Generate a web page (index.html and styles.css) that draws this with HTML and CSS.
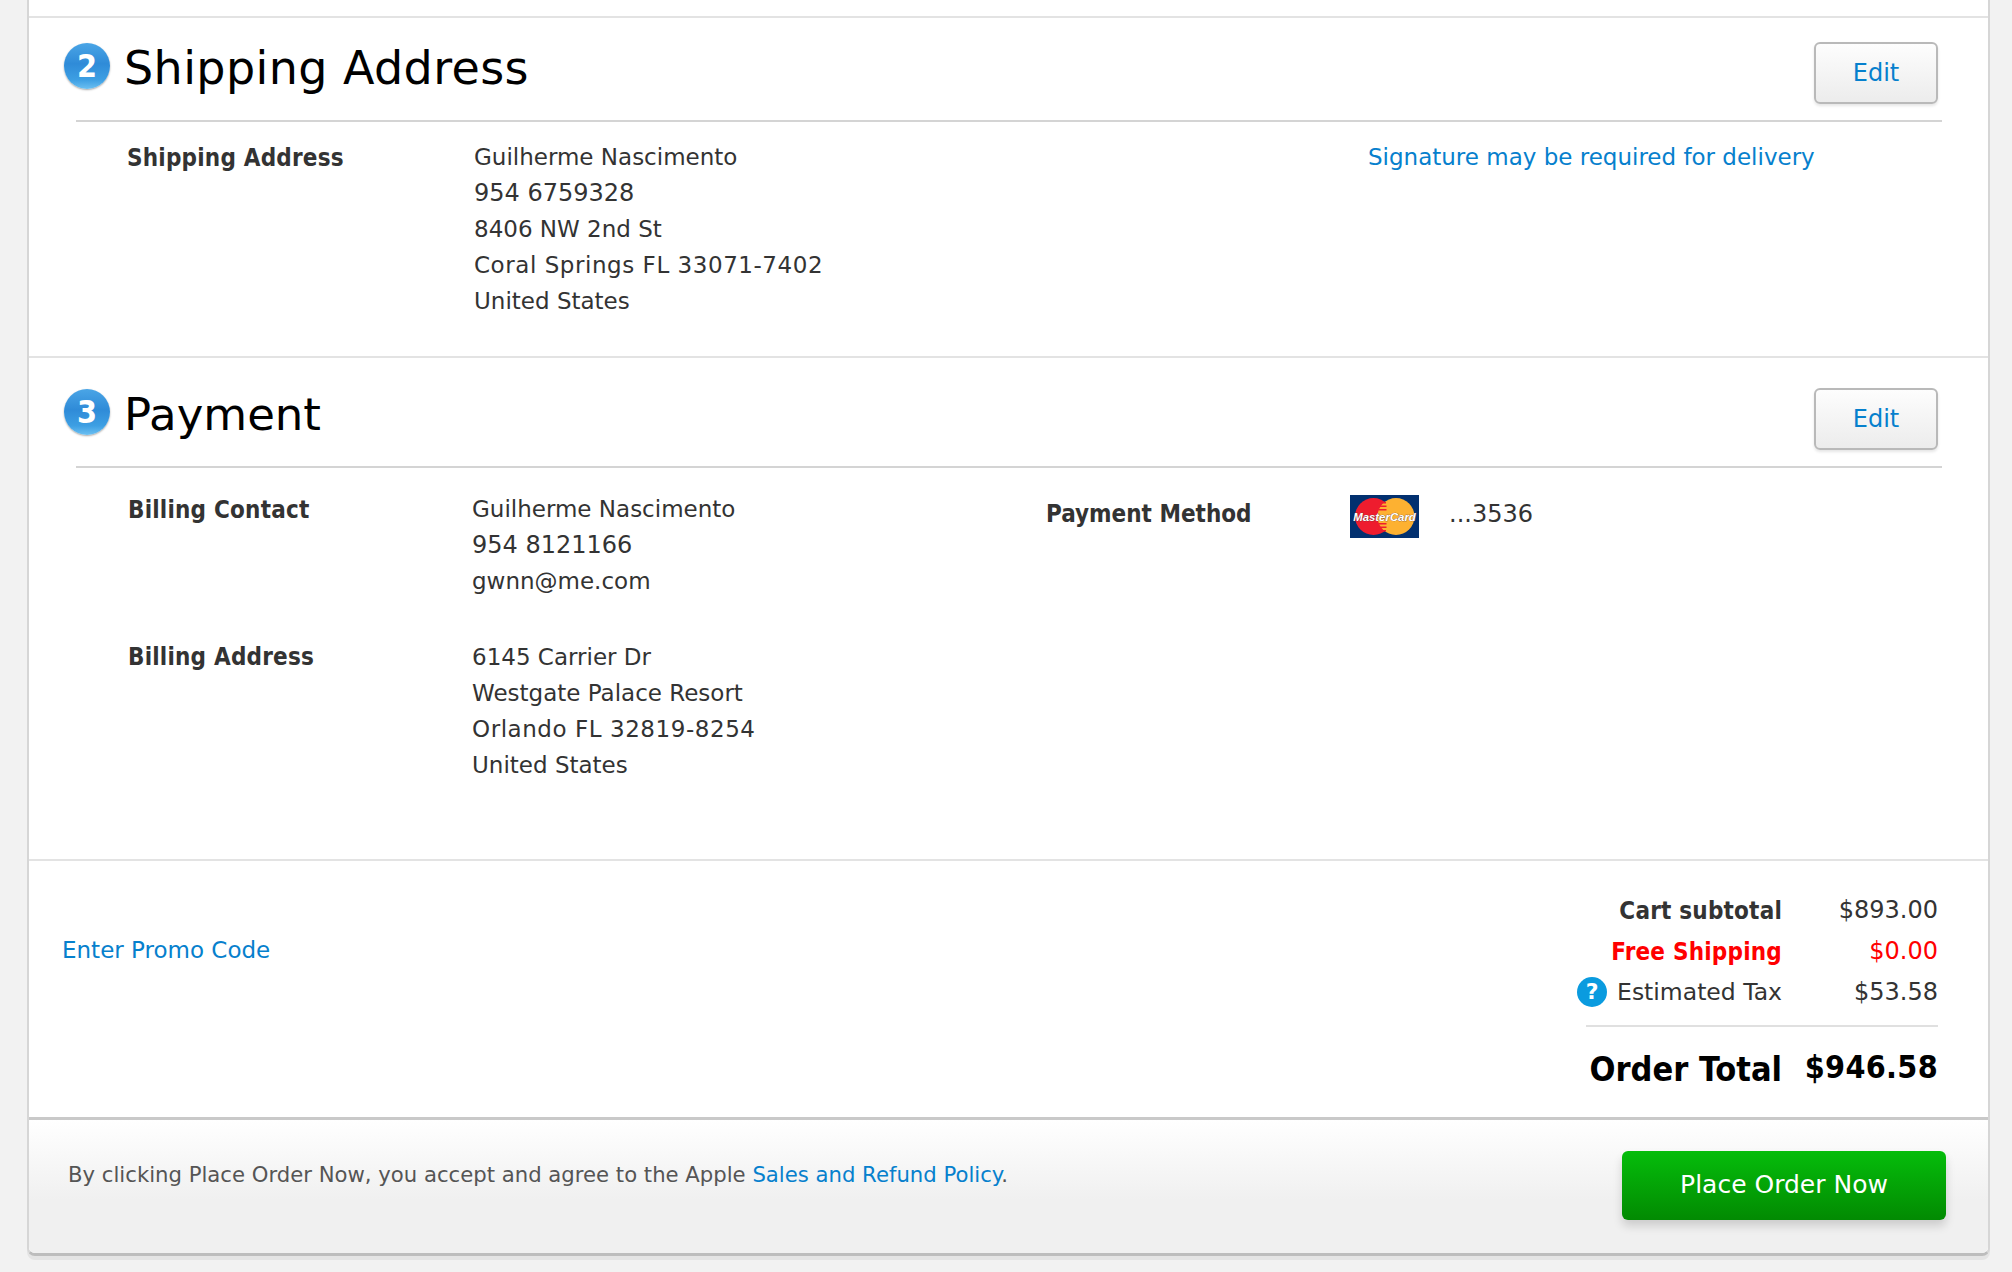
FILE: index.html
```html
<!DOCTYPE html>
<html lang="en">
<head>
<meta charset="utf-8">
<title>Checkout Review</title>
<link rel="stylesheet" href="styles.css">
</head>
<body>
<main class="panel">
  <section class="section section-shipping">
    <header class="head">
      <span class="step">2</span>
      <h2 class="title title-shipping">Shipping Address</h2>
      <a class="edit">Edit</a>
    </header>
    <div class="rows shipping-rows">
      <div class="label">Shipping Address</div>
      <div class="lines">
        <div>Guilherme Nascimento</div>
        <div class="num">954 6759328</div>
        <div>8406 NW 2nd St</div>
        <div class="wide">Coral Springs FL 33071-7402</div>
        <div>United States</div>
      </div>
      <a class="signature">Signature may be required for delivery</a>
    </div>
  </section>
  <section class="section section-payment">
    <header class="head head-payment">
      <span class="step">3</span>
      <h2 class="title title-payment">Payment</h2>
      <a class="edit">Edit</a>
    </header>
    <div class="rows payment-rows">
      <div class="billing">
        <div class="label">Billing Contact</div>
        <div class="lines">
          <div>Guilherme Nascimento</div>
          <div class="num">954 8121166</div>
          <div>gwnn@me.com</div>
        </div>
        <div class="label label-gap">Billing Address</div>
        <div class="lines lines-gap">
          <div>6145 Carrier Dr</div>
          <div>Westgate Palace Resort</div>
          <div class="wide">Orlando FL 32819-8254</div>
          <div>United States</div>
        </div>
      </div>
      <div class="method">
        <div class="label method-label">Payment Method</div>
        <svg class="card" viewBox="0 0 69 43" width="69" height="43" role="img" aria-label="MasterCard">
          <rect width="69" height="43" fill="#02306f"/>
          <circle cx="23.5" cy="21.5" r="18.5" fill="#ee1c2e"/>
          <circle cx="46" cy="21.5" r="18.5" fill="#fdb131"/>
          <g fill="#ee1c2e">
            <rect x="31" y="7" width="5" height="1.5"/>
            <rect x="29.5" y="10.5" width="7" height="1.5"/>
            <rect x="28.5" y="14" width="8" height="1.5"/>
            <rect x="28.5" y="28" width="8" height="1.5"/>
            <rect x="29.5" y="31.5" width="7" height="1.5"/>
            <rect x="31" y="35" width="5" height="1.5"/>
          </g>
          <text class="card-text" x="34.5" y="25.5" text-anchor="middle">MasterCard</text>
        </svg>
        <div class="card-num num">...3536</div>
      </div>
    </div>
  </section>
  <section class="summary">
    <a class="promo">Enter Promo Code</a>
    <div class="totals">
      <div class="total-row">
        <div class="total-label strong">Cart subtotal</div>
        <div class="total-value">$893.00</div>
      </div>
      <div class="total-row red">
        <div class="total-label strong">Free Shipping</div>
        <div class="total-value">$0.00</div>
      </div>
      <div class="total-row">
        <div class="total-label tax"><span class="help">?</span><span>Estimated Tax</span></div>
        <div class="total-value">$53.58</div>
      </div>
      <div class="total-row grand">
        <div class="total-label">Order Total</div>
        <div class="total-value">$946.58</div>
      </div>
    </div>
  </section>
  <footer class="foot">
    <p class="terms">By clicking Place Order Now, you accept and agree to the Apple <a>Sales and Refund Policy</a>.</p>
    <a class="place">Place Order Now</a>
  </footer>
</main>
</body>
</html>
```
FILE: styles.css
```css
* { box-sizing: border-box; }
html, body { margin: 0; height: 100%; }
body {
  background: #f2f2f2;
  font-family: "DejaVu Sans", sans-serif;
  font-size: 23px;
  color: #333;
  overflow: hidden;
}
a { color: #0680cd; }
.panel {
  width: 1963px;
  margin-left: 27px;
  height: 1256px;
  background: #fff;
  border-left: 2px solid #d6d6d6;
  border-right: 2px solid #d6d6d6;
  border-bottom: 3px solid #bdbdbd;
  border-radius: 0 0 8px 8px;
  box-shadow: 0 4px 0 #e4e4e4;
  display: flex;
  flex-direction: column;
}
.section { border-top: 2px solid #e3e3e3; }
.section-shipping { margin-top: 16px; height: 340px; }
.section-payment { height: 503px; }
.head {
  display: flex;
  align-items: center;
  height: 104px;
  margin: 0 46px 0 47px;
  padding-bottom: 6px;
  border-bottom: 2px solid #d4d4d4;
}
.head-payment { height: 110px; padding-bottom: 0; }
.step {
  width: 46px;
  height: 46px;
  margin-left: -12px;
  border-radius: 50%;
  background: linear-gradient(#4aa5e6 0, #2f8bd8 45%, #3d9fe3 80%, #6cc0f2 100%);
  box-shadow: 0 1px 2px rgba(0,0,0,.35);
  color: #fff;
  font-size: 32px;
  font-stretch: condensed;
  font-weight: 700;
  line-height: 46px;
  text-align: center;
}
.title {
  margin: 4px 0 0 14px;
  font-size: 46px;
  font-weight: 400;
  color: #000;
  flex: 1;
}
.title-shipping { letter-spacing: .4px; }
.title-payment { font-size: 45px; }
.edit {
  width: 124px;
  height: 62px;
  margin-right: 4px;
  margin-top: 14px;
  border: 2px solid #b9b9b9;
  border-radius: 6px;
  background: linear-gradient(#fdfdfd, #ececec);
  box-shadow: 0 2px 3px rgba(0,0,0,.1);
  font-size: 24px;
  line-height: 58px;
  text-align: center;
}
.rows { display: flex; position: relative; }
.shipping-rows { padding: 18px 0 0 98px; }
.shipping-rows .label { width: 347px; }
.payment-rows { padding: 24px 0 0 99px; }
.label { font-weight: 700; font-size: 24px; font-stretch: condensed; line-height: 36px; letter-spacing: .2px; }
.method-label { letter-spacing: 0; }
.lines { line-height: 36px; margin-top: -1px; }
.num { font-size: 24px; }
.wide { letter-spacing: .55px; }
.signature { position: absolute; left: 1339px; top: 17px; line-height: 36px; }
.billing { display: grid; grid-template-columns: 344px 600px; width: 918px; }
.label-gap, .lines-gap { margin-top: 40px; }
.method { display: flex; align-items: flex-start; padding-top: 4px; }
.method-label { width: 304px; }
.card { display: block; margin-top: -1px; flex: none; }
.card-text {
  font: italic 700 11.4px "Liberation Sans", sans-serif;
  fill: #fff;
  stroke: #5a3a3a;
  stroke-width: .5px;
  paint-order: stroke;
}
.card-num { margin-left: 30px; line-height: 36px; }
.summary {
  border-top: 2px solid #e3e3e3;
  height: 258px;
  display: flex;
  justify-content: space-between;
  padding: 0 50px 0 33px;
}
.promo { line-height: 36px; margin-top: 71px; }
.totals { width: 352px; padding-top: 31px; }
.total-row { display: flex; line-height: 36px; height: 41px; }
.total-label { flex: 1; min-width: 0; white-space: nowrap; display: flex; justify-content: flex-end; align-items: flex-start; }
.total-value { width: 156px; flex: none; text-align: right; font-size: 24px; }
.strong { font-weight: 700; font-size: 24px; font-stretch: condensed; letter-spacing: .2px; padding-top: 1px; }
.red { color: #f00; }
.tax { font-size: 23.5px; }
.help {
  flex: none;
  width: 30px;
  height: 30px;
  margin: 3px 10px 0 0;
  border-radius: 50%;
  background: #0a9bdf;
  color: #fff;
  font-weight: 700;
  font-size: 22px;
  line-height: 30px;
  text-align: center;
}
.grand {
  margin-top: 10px;
  height: 74px;
  padding-top: 24px;
  border-top: 2px solid #e0e0e0;
  color: #000;
  font-weight: 700;
  font-stretch: condensed;
}
.grand .total-label { font-size: 34px; }
.grand .total-value { font-size: 32px; letter-spacing: .3px; margin-top: -2px; }
.foot {
  flex: 1;
  border-top: 3px solid #c9c9c9;
  background: linear-gradient(#fff 0, #f0f0f0 60%);
  display: flex;
  justify-content: space-between;
  padding: 39px 42px 0 39px;
  border-radius: 0 0 6px 6px;
}
.terms { margin: 0; font-size: 21.2px; line-height: 32px; color: #555; }
.terms a { color: #0680cd; }
.place {
  width: 324px;
  height: 69px;
  margin-top: -8px;
  border-radius: 6px;
  background: linear-gradient(#05bd0b, #028a02);
  box-shadow: 0 6px 10px rgba(0,0,0,.15);
  color: #fff;
  font-size: 25px;
  line-height: 68px;
  text-align: center;
}
```
